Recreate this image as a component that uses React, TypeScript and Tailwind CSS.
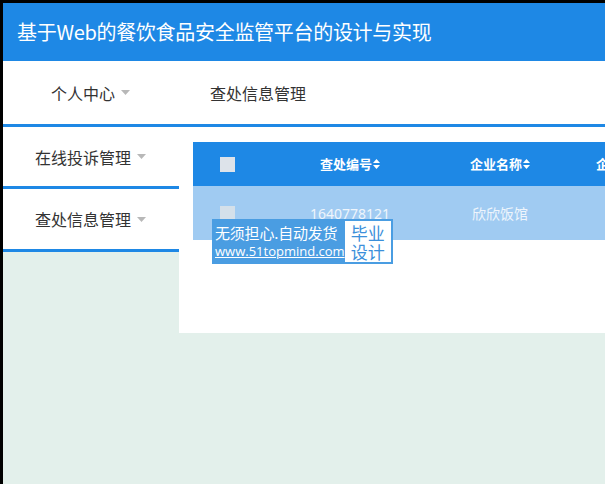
import React from "react";

const Caret = () => (
  <svg width="9" height="5" viewBox="0 0 9 5" className="ml-[6px] inline-block">
    <path d="M0 0 L9 0 L4.5 5 Z" fill="#b8b8b8" />
  </svg>
);

const Sort = () => (
  <svg width="7" height="10" viewBox="0 0 7 10" className="ml-[1px] inline-block">
    <path d="M0 4 L7 4 L3.5 0 Z" fill="#ffffff" />
    <path d="M0 6 L7 6 L3.5 10 Z" fill="#ffffff" />
  </svg>
);

export default function App() {
  return (
    <div
      className="w-[605px] h-[484px] overflow-hidden bg-black pt-[3px] pl-[3px]"
      style={{ fontFamily: '"Microsoft YaHei", "Noto Sans CJK SC", "Noto Sans", sans-serif' }}
    >
      <div className="h-full bg-[#e3f0eb] flex flex-col">
        {/* header */}
        <div className="h-[58px] bg-[#1e88e5] flex items-center pl-[14px] shrink-0">
          <span className="text-white text-[20px] tracking-[-0.3px] font-normal">
            基于Web的餐饮食品安全监管平台的设计与实现
          </span>
        </div>
        {/* top nav */}
        <div className="h-[66px] bg-white border-b-[3px] border-[#1e88e5] flex items-center text-[16px] text-[#333] shrink-0">
          <div className="pl-[48px] w-[204px] flex items-center">
            个人中心
            <Caret />
          </div>
          <div className="pl-[3px]">查处信息管理</div>
        </div>
        {/* body */}
        <div className="flex">
          <div className="w-[176px] shrink-0">
            <div className="h-[62px] bg-white border-b-[3px] border-[#1e88e5] flex items-center pl-[32px] text-[16px] text-[#333]">
              在线投诉管理
              <Caret />
            </div>
            <div className="h-[63px] bg-white border-b-[3px] border-[#1e88e5] flex items-center pl-[32px] text-[16px] text-[#333]">
              查处信息管理
              <Caret />
            </div>
          </div>
          <div className="flex-1 h-[206px] bg-white pl-[14px] pt-[15px] overflow-hidden relative">
            <div className="w-[560px]">
              <div className="h-[44px] bg-[#1e88e5] flex items-center text-white text-[13px] font-bold">
                <div className="w-[68px] flex justify-center">
                  <div className="w-[15px] h-[15px] bg-[#dde3ea]" />
                </div>
                <div className="w-[178px] flex justify-center items-center">
                  查处编号
                  <Sort />
                </div>
                <div className="w-[122px] flex justify-center items-center">
                  企业名称
                  <Sort />
                </div>
                <div className="w-[130px] flex justify-center items-center">
                  企业类型
                  <Sort />
                </div>
              </div>
              <div className="h-[54px] bg-[#a0cbf2] flex items-center text-[#eef5fc] text-[14px]">
                <div className="w-[68px] flex justify-center">
                  <div className="w-[15px] h-[15px] bg-[#d4e0ea]" />
                </div>
                <div className="w-[178px] text-center" style={{ fontFamily: '"Noto Sans", sans-serif' }}>
                  1640778121
                </div>
                <div className="w-[122px] text-center">欣欣饭馆</div>
              </div>
            </div>
            {/* watermark */}
            <div className="absolute left-[33px] top-[92px] w-[181px] h-[45px] bg-[#4a9de2] flex items-center pl-[3px] pr-[2px]">
              <div className="flex flex-col text-white leading-none">
                <span className="text-[15px] tracking-[-0.2px]">无须担心.自动发货</span>
                <span className="text-[13px] underline mt-[5px]" style={{ fontFamily: '"Open Sans", sans-serif' }}>
                  www.51topmind.com
                </span>
              </div>
              <div className="ml-auto w-[47px] h-[41px] bg-white flex flex-col items-center justify-center text-[#3b8fda] text-[17px] leading-[19px]">
                <span>毕业</span>
                <span>设计</span>
              </div>
            </div>
          </div>
        </div>
      </div>
    </div>
  );
}
